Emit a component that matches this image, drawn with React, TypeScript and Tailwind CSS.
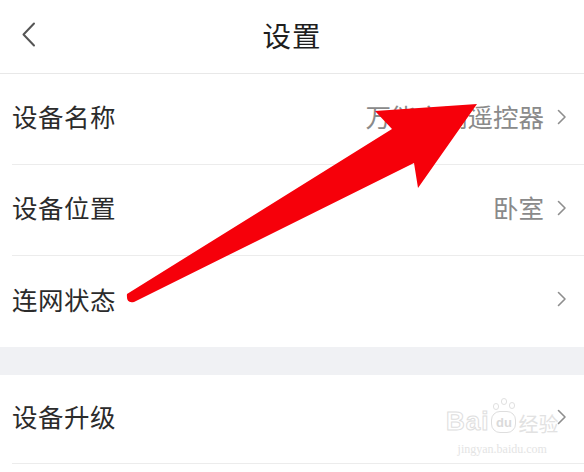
import { ReactNode } from "react";

// 右侧小箭头
const Chevron = () => (
  <svg width="10" height="16" viewBox="0 0 10 16" className="ml-[13px] shrink-0">
    <path d="M1.5 1.5 L8 8 L1.5 14.5" fill="none" stroke="#8e8e8e" strokeWidth="1.6" strokeLinecap="round" strokeLinejoin="round" />
  </svg>
);

type RowProps = {
  label: string;
  value?: ReactNode;
  height: string;
  divider?: boolean;
};

const Row = ({ label, value, height, divider = true }: RowProps) => (
  <div className={`ml-3 flex items-center pb-[5px] pr-[17px] ${height} ${divider ? "border-b border-[#ececec]" : ""}`}>
    <span className="flex-1 text-[25.5px] text-[#2b2b2b] tracking-[0.5px]">{label}</span>
    {value && <span className="text-[25.5px] text-[#8a8a8a]">{value}</span>}
    <Chevron />
  </div>
);

export default function App() {
  return (
    <div className="relative w-[584px] h-[472px] overflow-hidden bg-white font-['Noto_Sans_CJK_SC','Noto_Sans',sans-serif]">
      {/* Header */}
      <div className="relative flex h-[74px] items-center justify-center border-b border-[#e8e8e8] pb-[2px]">
        <svg width="16" height="26" viewBox="0 0 16 26" className="absolute left-[21px] top-[22px]">
          <path d="M13 1.5 L2.5 12.5 L13 23.5" fill="none" stroke="#555" strokeWidth="2" strokeLinecap="round" strokeLinejoin="round" />
        </svg>
        <h1 className="text-[28.5px] text-[#1e1e1e] tracking-[1px]">设置</h1>
      </div>

      {/* Settings list */}
      <Row label="设备名称" value="万能空调遥控器" height="h-[91px]" />
      <Row label="设备位置" value="卧室" height="h-[91px]" />
      <Row label="连网状态" height="h-[91px]" divider={false} />
      <div className="h-[28px] bg-[#f0f1f4]" />
      <Row label="设备升级" height="h-[89px]" />

      {/* 水印 */}
      <div className="pointer-events-none absolute left-[446px] top-[408px] flex flex-col items-center">
        <div className="flex items-end leading-none">
          <span className="font-['Liberation_Sans',sans-serif] text-[26px] font-bold tracking-[1px]" style={{ WebkitTextStroke: "1px #dedede", color: "white" }}>Bai</span>
          <span className="relative mx-[2px] mb-[1px] flex h-[22px] w-[25px] items-center justify-center rounded-[9px] border border-[#dedede] font-['Liberation_Sans',sans-serif] text-[13px] font-bold text-[#dadada]">
            du
            <span className="absolute -top-[9px] left-[1px] h-[7px] w-[6px] rounded-full border border-[#e0e0e0]" />
            <span className="absolute -top-[14px] left-[9px] h-[7px] w-[6px] rounded-full border border-[#e0e0e0]" />
            <span className="absolute -top-[10px] left-[17px] h-[7px] w-[6px] rounded-full border border-[#e0e0e0]" />
          </span>
          <span className="text-[20px] text-[#e2e2e2]">经验</span>
        </div>
        <span className="mt-[6px] font-['Liberation_Serif',serif] text-[12px] text-[#e4e4e4]">jingyan.baidu.com</span>
      </div>

      {/* 红色箭头标注 */}
      <svg width="584" height="472" className="pointer-events-none absolute left-0 top-0">
        <path
          d="M127 294 L392 129 L375 111 L477 104 L418 188 L414 163 L134 302 Q126 304 127 294 Z"
          fill="#f6000a"
        />
      </svg>
    </div>
  );
}
